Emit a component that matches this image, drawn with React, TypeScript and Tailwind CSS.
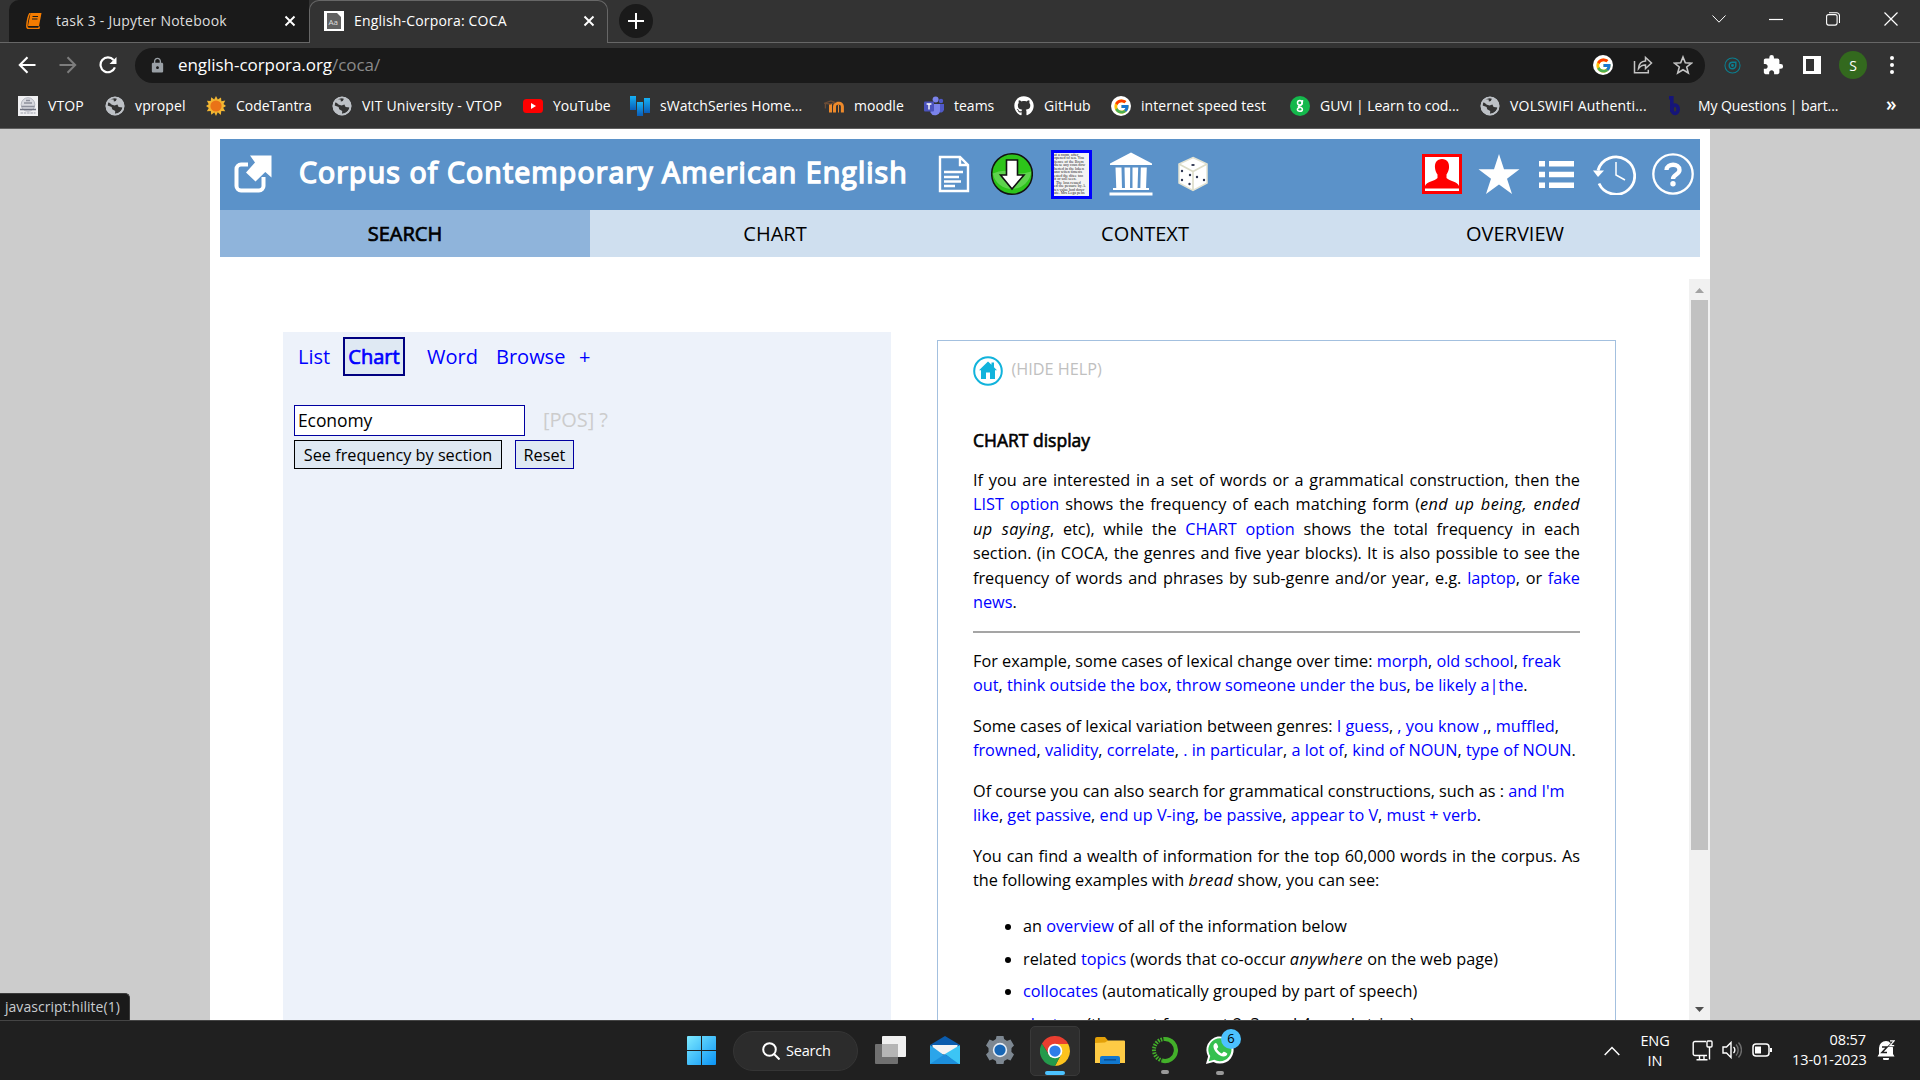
import React from "react";
import { FcGoogle } from "react-icons/fc";
import { FaGithub } from "react-icons/fa";
import { MdExtension, MdLock } from "react-icons/md";

type Kids = { children: React.ReactNode };

function Globe() {
  return (
    <svg viewBox="0 0 20 20" className="h-5 w-5">
      <circle cx="10" cy="10" r="9.3" fill="#bdc1c6" />
      <path d="M8.6 1.8 L12 2.6 L10.8 5 L8.2 5.8 L6.2 8.4 L9.6 9.4 L12.4 8.6 L13.6 11 L17.6 11.6 C16.6 15 14 17.6 10 17.9 L10.2 15 L7.2 13.2 L6.6 11 L2.6 9.4 C2.6 9.4 3 4 8.6 1.8 Z" fill="#333" />
      <path d="M3 5.8 L6.4 8.2 L9 6.4 L8.6 3.6 L6 3.2Z" fill="#bdc1c6" />
      <circle cx="10" cy="10" r="8.6" fill="none" stroke="#bdc1c6" strokeWidth="1.8" />
    </svg>
  );
}

function GoogleDot() {
  return (
    <span className="flex h-5 w-5 items-center justify-center rounded-full bg-white">
      <FcGoogle size={17} />
    </span>
  );
}

function VtopIcon() {
  return (
    <svg viewBox="0 0 20 20" className="h-5 w-5">
      <rect width="20" height="20" fill="#f0f0f2" />
      <circle cx="10" cy="8.5" r="6.8" fill="#d8d9df" stroke="#b5b7c0" strokeWidth="1" />
      <path d="M3.5 10.5h13M6 7h8M8 4.500h4" stroke="#8d909c" strokeWidth="1.5" />
      <path d="M2 13.500h16" stroke="#6f7280" strokeWidth="1.5" />
      <path d="M2.500 17h15" stroke="#9a9ca8" strokeWidth="1.2" strokeDasharray="2.5 .8" />
    </svg>
  );
}

function SunIcon() {
  return (
    <svg viewBox="0 0 20 20" className="h-5 w-5">
      <path d="M10 0l1.800 3.600L15 1.400l.4 3.800 3.900-.6-1.800 3.500L20 10l-2.800 1.800 2 3.400-3.900-.3-.5 4-3-2.600L10 20l-1.700-3.400-3.100 2.200-.4-3.900-4 .4 2-3.400L0 10l2.700-1.800L.9 4.700l3.800.4.5-3.800 3 2.200z" fill="#f2b632" />
      <circle cx="10" cy="10" r="5.6" fill="#ea7317" />
    </svg>
  );
}

function YouTubeIcon() {
  return (
    <svg viewBox="0 0 20 20" className="h-5 w-5">
      <rect y="3" width="20" height="14" rx="3.5" fill="#f00" />
      <path d="M8 7l5 3-5 3z" fill="#fff" />
    </svg>
  );
}

function WatchIcon() {
  return (
    <svg viewBox="0 0 20 20" className="h-5 w-5">
      <defs>
        <linearGradient id="wt" x1="0" y1="0" x2="0" y2="1">
          <stop offset="0" stopColor="#16b1f5" />
          <stop offset="1" stopColor="#0a5cb8" />
        </linearGradient>
      </defs>
      <rect width="6" height="14" fill="url(#wt)" />
      <rect x="7" y="6" width="6" height="14" fill="url(#wt)" />
      <rect x="14" y="2" width="6" height="15" fill="url(#wt)" />
    </svg>
  );
}

function MoodleIcon() {
  return (
    <svg viewBox="0 0 20 20" className="h-5 w-5" fill="none">
      <path d="M6.500 8v8.500M10.500 16.500V10.500a3.200 3.200 0 0 1 3.200-3.200h1.500a3.200 3.200 0 0 1 3.200 3.200v6" stroke="#ee8a2b" strokeWidth="3" />
      <path d="M14.500 9v7.500" stroke="#ee8a2b" strokeWidth="1" />
      <path d="M0 7.500L7 5l4 1.500-5 1.500-4.600-.6v5" stroke="#6b4c35" strokeWidth="1.3" />
    </svg>
  );
}

function TeamsIcon() {
  return (
    <svg viewBox="0 0 20 20" className="h-5 w-5">
      <circle cx="17" cy="5" r="2.2" fill="#5059c9" />
      <circle cx="11.6" cy="3.6" r="3" fill="#7b83eb" />
      <path d="M14 8h6v5.500a3.200 3.200 0 0 1-5 2.400z" fill="#5059c9" />
      <path d="M7 8h9v6.500a5 5 0 0 1-9.500 2z" fill="#7b83eb" />
      <rect y="5.5" width="10" height="10" rx="1" fill="#4b53bc" />
      <path d="M2.600 8h4.800M5 8v5.400" stroke="#fff" strokeWidth="1.4" />
    </svg>
  );
}

function GuviIcon() {
  return (
    <svg viewBox="0 0 20 20" className="h-5 w-5" fill="none" stroke="#fff" strokeWidth="1.5">
      <circle cx="10" cy="10" r="10" fill="#14b84c" stroke="none" />
      <circle cx="9.8" cy="6.7" r="2.3" />
      <path d="M12.600 4.200L12 8.200c-1 1.600-3.600 1-3.600 2.200 0 .8 4 .4 4 3 0 2.600-5 2.400-5 .2 0-1.200 1-1.800 2.400-2" />
    </svg>
  );
}

function BIcon() {
  return (
    <svg viewBox="0 0 20 20" className="h-5 w-5" fill="none" stroke="#16157a" strokeWidth="3.6">
      <path d="M1 1.800h2.800V16" />
      <ellipse cx="7" cy="13.3" rx="3.2" ry="4.2" />
    </svg>
  );
}

function Bookmark({ w, icon, label, track }: { w: string; icon: React.ReactNode; label: string; track: string }) {
  return (
    <div className={`flex shrink-0 items-center gap-[10px] whitespace-nowrap ${w}`}>
      <span className="flex h-5 w-5 shrink-0 items-center justify-center">{icon}</span>
      <span className={`pb-[2px] ${track}`}>{label}</span>
    </div>
  );
}

function CloseX() {
  return (
    <svg viewBox="0 0 12 12" className="h-3 w-3" stroke="#fff" strokeWidth="1.9">
      <path d="M1.500 1.500l9 9M10.500 1.500l-9 9" />
    </svg>
  );
}

function TabStrip() {
  return (
    <div className="flex h-[43px] bg-[#333]">
      <div className="flex w-[9px] shrink-0 items-end border-b border-[#676767]" />
      <div className="flex w-[300px] shrink-0 items-center rounded-tl-[10px] border-b border-[#676767] bg-[#1a1a1a] pl-[17px] text-[#dedede]">
        <svg viewBox="0 0 16 16" className="h-4 w-4">
          <path d="M4.500 0H15.500L13 13H2z" fill="#f57c00" />
          <path d="M4.500 0C2.500.5 1 9 .8 13c0 1.600.8 2.500 2 2.500h10l.6-2" fill="none" stroke="#f57c00" strokeWidth="1.5" />
          <path d="M6.500 3.500h5.500M6 6h5.500" stroke="#1a1a1a" strokeWidth="1.2" />
        </svg>
        <span className="ml-[14px] w-[216px] whitespace-nowrap pb-[2px] text-[14px] tracking-[0.24px]">task 3 - Jupyter Notebook</span>
        <span className="ml-[12px]"><CloseX /></span>
      </div>
      <div className="flex w-[299px] shrink-0 items-center rounded-t-[10px] border border-b-0 border-[#676767] pb-[2px] pl-[14px] text-white">
        <svg viewBox="0 0 20 20" className="h-5 w-5">
          <rect width="20" height="20" fill="#fff" />
          <path d="M3 2h10l4 4v12H3z" fill="#616161" />
          <text x="4.5" y="14" fontSize="8" fill="#ddd" fontFamily="Open Sans">Aa</text>
        </svg>
        <span className="ml-[10px] w-[219px] whitespace-nowrap pb-[1px] text-[14px] tracking-[0.18px]">English-Corpora: COCA</span>
        <span className="ml-[10px]"><CloseX /></span>
      </div>
      <div className="flex flex-1 items-center border-b border-[#676767] pl-[11px]">
        <span className="flex h-[34px] w-[34px] items-center justify-center rounded-full bg-[#1a1a1a]">
          <svg viewBox="0 0 16 16" className="h-4 w-4" stroke="#fff" strokeWidth="2"><path d="M8 0v16M0 8h16" /></svg>
        </span>
        <div className="ml-auto mt-[-5px] flex items-center pr-[22px]">
          <svg viewBox="0 0 14 8" className="mr-[43px] h-2 w-[14px]" fill="none" stroke="#fff"><path d="M.5.5L7 7.200 13.500.5" /></svg>
          <svg viewBox="0 0 14 14" className="mr-[43px] h-[14px] w-[14px]" stroke="#fff" strokeWidth="1.2"><path d="M0 7.500h14" /></svg>
          <svg viewBox="0 0 14 14" className="mr-[44px] h-[14px] w-[14px]" fill="none" stroke="#fff" strokeWidth="1.1">
            <rect x=".6" y="2.6" width="10.5" height="10.5" rx="2" />
            <path d="M3 .8h7.500a3 3 0 0 1 3 3V11" />
          </svg>
          <svg viewBox="0 0 14 14" className="h-[14px] w-[14px]" stroke="#fff" strokeWidth="1.2"><path d="M.5.5l13 13M13.500.5l-13 13" /></svg>
        </div>
      </div>
    </div>
  );
}

function Toolbar() {
  return (
    <div className="flex h-[44px] items-center bg-[#333] pl-[18px]">
      <svg viewBox="0 0 18 18" className="h-[18px] w-[18px]" fill="none" stroke="#fff" strokeWidth="2.1"><path d="M17.500 9H2M9.500 1.200L1.800 9l7.700 7.800" /></svg>
      <svg viewBox="0 0 18 18" className="ml-[23px] h-[18px] w-[18px]" fill="none" stroke="#7d7d7d" strokeWidth="2"><path d="M.5 9H16M8.500 1.200L16.200 9l-7.700 7.800" /></svg>
      <svg viewBox="0 0 18 18" className="ml-[22px] h-[18px] w-[18px]" fill="none" stroke="#fff" strokeWidth="2.2">
        <path d="M15.900 11.400A7.400 7.400 0 1 1 14.600 4" />
        <path d="M17.500 1v7h-7z" fill="#fff" stroke="none" />
      </svg>
      <div className="ml-[18px] flex h-[35px] w-[1570px] items-center rounded-full bg-[#1a1a1a] pl-[14px] pr-[12px]">
        <MdLock size={17} color="#9aa0a6" />
        <span className="ml-[12px] whitespace-nowrap text-[17px] tracking-[-0.05px] text-white">english-corpora.org<span className="text-[#8b8b8b]">/coca/</span></span>
        <div className="ml-auto flex items-center">
          <GoogleDot />
          <svg viewBox="0 0 20 20" className="ml-[20px] h-5 w-5" fill="none" stroke="#c4c4c4" strokeWidth="1.5">
            <path d="M1.500 6v11.800h13.800v-3" />
            <path d="M5.500 13.500c.4-5 3.200-7.300 7-7.500V2.500l6 5.500-6 5.500V10c-3-.1-5 .8-7 3.500z" />
          </svg>
          <svg viewBox="0 0 20 20" className="ml-[20px] h-5 w-5" fill="none" stroke="#c4c4c4" strokeWidth="1.6"><path d="M10 2l2.300 5.700 6.200.4-4.800 3.900 1.600 6-5.300-3.300L4.700 18l1.600-6L1.500 8.100l6.200-.4z" /></svg>
        </div>
      </div>
      <svg viewBox="0 0 18 18" className="ml-[19px] h-[17px] w-[17px]" fill="none" stroke="#0b7f90" strokeWidth="1.5">
        <circle cx="9" cy="9" r="8" strokeWidth="1.1" />
        <path d="M12.500 5.500v3.500a3.500 3.500 0 1 1-3.500-3.500z" />
        <circle cx="9" cy="9" r=".8" />
      </svg>
      <span className="ml-[21px]"><MdExtension size={22} color="#fff" /></span>
      <span className="ml-[19px] h-[18px] w-[18px] border-[3px] border-r-[7px] border-white" />
      <span className="ml-[18px] flex h-7 w-7 items-center justify-center rounded-full bg-[#33691e] text-[14px] text-white">S</span>
      <span className="ml-[23px] flex flex-col gap-[3px]">
        <i className="h-[4px] w-[4px] rounded-full bg-white" />
        <i className="h-[4px] w-[4px] rounded-full bg-white" />
        <i className="h-[4px] w-[4px] rounded-full bg-white" />
      </span>
    </div>
  );
}

function Bookmarks() {
  return (
    <div className="flex h-[42px] items-center border-b border-[#5f5f5f] bg-[#333] pb-[3px] pl-[18px] text-[14px] text-white">
      <Bookmark w="w-[87px]" icon={<VtopIcon />} label="VTOP" track="tracking-[0.1px]" />
      <Bookmark w="w-[101px]" icon={<Globe />} label="vpropel" track="tracking-[0.15px]" />
      <Bookmark w="w-[126px]" icon={<SunIcon />} label="CodeTantra" track="tracking-[-0.05px]" />
      <Bookmark w="w-[191px]" icon={<Globe />} label="VIT University - VTOP" track="tracking-[0.2px]" />
      <Bookmark w="w-[107px]" icon={<YouTubeIcon />} label="YouTube" track="tracking-[0px]" />
      <Bookmark w="w-[194px]" icon={<WatchIcon />} label="sWatchSeries Home..." track="tracking-[0.05px]" />
      <Bookmark w="w-[100px]" icon={<MoodleIcon />} label="moodle" track="tracking-[0px]" />
      <Bookmark w="w-[90px]" icon={<TeamsIcon />} label="teams" track="tracking-[0px]" />
      <Bookmark w="w-[97px]" icon={<FaGithub size={20} />} label="GitHub" track="tracking-[0.1px]" />
      <Bookmark w="w-[179px]" icon={<GoogleDot />} label="internet speed test" track="tracking-[0.08px]" />
      <Bookmark w="w-[190px]" icon={<GuviIcon />} label="GUVI | Learn to cod..." track="tracking-[-0.05px]" />
      <Bookmark w="w-[188px]" icon={<Globe />} label="VOLSWIFI Authenti..." track="tracking-[0.2px]" />
      <Bookmark w="w-[218px]" icon={<BIcon />} label="My Questions | bart..." track="tracking-[-0.1px]" />
      <span className="pb-[3px] text-[19px] font-semibold leading-none">»</span>
    </div>
  );
}

function DiceIcon() {
  return (
    <svg viewBox="0 0 34 36" className="h-[36px] w-[34px]">
      <path d="M17 1.500L31 8v19L17 34.500 3 27V8z" fill="#fff" stroke="#e3e3d3" strokeWidth="1.5" />
      <path d="M3 8l14 7.500L31 8M17 15.500v19" fill="none" stroke="#dcdcc8" strokeWidth="1.6" />
      <g fill="#2d3550">
        <ellipse cx="17" cy="9" rx="1.8" ry="1.1" />
        <circle cx="6" cy="15" r="1.2" /><circle cx="14" cy="19" r="1.2" /><circle cx="6" cy="24" r="1.2" /><circle cx="13.5" cy="28" r="1.2" />
        <circle cx="21" cy="21" r="1.2" /><circle cx="28" cy="24" r="1.2" />
      </g>
    </svg>
  );
}

const PAGE_TEXT = ["at a room, after", "opened to sea. You", "itence of the Brem", "these any cous dow", "berted in the loken", "ano witen timests", "ested the ditee too", "it or soll seen.", "  The loss resued", "ed the pessure by A", "tes value hod dowr", "ate. Mrs Lega pebs"];

function Header() {
  return (
    <div className="flex h-[71px] items-center bg-[#5b92c9] pb-[1px]">
      <svg viewBox="0 0 38 38" className="ml-[14px] h-[38px] w-[38px]">
        <path d="M14 9.500H7a4.500 4.500 0 0 0-4.500 4.500v17A4.500 4.500 0 0 0 7 35.500h18a4.500 4.500 0 0 0 4.500-4.500v-9" fill="none" stroke="#fff" strokeWidth="4" />
        <path d="M16 .5H37.500V22.500L31.300 17 21.500 26.500 12 17.500 21 7.500z" fill="#fff" />
      </svg>
      <h1 className="ml-[27px] w-[612px] whitespace-nowrap pb-[4px] text-[28.5px] tracking-[1.12px] text-white [-webkit-text-stroke:1.5px_white]">Corpus of Contemporary American English</h1>
      <svg viewBox="0 0 32 38" className="ml-[27px] h-[38px] w-[32px]" fill="none" stroke="#fff" strokeWidth="2.4">
        <path d="M2 2h20l8 8v26H2zM22 2v8h8" />
        <path d="M6 17h19M6 22h15M6 26.500h17M6 31h11" />
      </svg>
      <svg viewBox="0 0 42 44" className="ml-[21px] h-[44px] w-[42px]">
        <circle cx="21" cy="22" r="20.3" fill="#2dc41a" stroke="#111" strokeWidth="1.5" />
        <path d="M1.800 21.500Q12 17 20 20t20.300-.5A19.500 19.500 0 0 1 1.800 21.500z" fill="#5ed34d" />
        <path d="M15.500 8h11v15H33L21 37 9.500 23h6z" fill="#fff" stroke="#111" strokeWidth="1.6" />
      </svg>
      <div className="ml-[18px] h-[49px] w-[41px] overflow-hidden border-[3px] border-[#00f] bg-[#f3f3f3] font-['Liberation_Serif'] text-[4px] leading-[3.5px] text-[#222]">
        {PAGE_TEXT.map((t) => <div key={t} className="whitespace-pre">{t}</div>)}
      </div>
      <svg viewBox="0 0 44 44" className="ml-[17px] h-[44px] w-[44px]" fill="#fff">
        <path d="M22 .5L43 11.500v1.500H1v-1.500zM6.500 15.500h6L13 37H7.300zM15.500 15.500h5.700L21 37h-5zM23.500 15.500h5.700L28.500 37h-5zM31.800 15.500h6L37 37h-5.700zM4 36h36v2H4zM.5 40.500h43v3H.5z" />
      </svg>
      <span className="ml-[23px]"><DiceIcon /></span>
      <div className="ml-auto flex items-center pr-[6px]">
        <svg viewBox="0 0 40 40" className="h-10 w-10">
          <rect x="1.5" y="1.5" width="37" height="37" fill="#fff" stroke="#f00" strokeWidth="3" />
          <path d="M20 5c5 0 7.500 3.500 7 9-.3 3-1.500 5-2.500 6.500V24c3 3 11 3.500 12.500 8v2.500H3V32c1.500-4.500 10-5 12.500-8v-3.500C14.300 19 13.300 17 13 14c-.5-5.500 2-9 7-9z" fill="#f00" />
        </svg>
        <svg viewBox="0 0 42 40" className="ml-[16px] h-[40px] w-[42px]"><path d="M21 0l5 15.200h15.500L29 24.700 34 40 21 30.500 8 40l5-15.300L.5 15.200H16z" fill="#fff" /></svg>
        <svg viewBox="0 0 35 27" className="ml-[19px] h-[27px] w-[35px]" fill="#fff"><path d="M0 0h6v5.500H0zM10 0h25v5.500H10zM0 10.700h6v5.500H0zM10 10.700h25v5.500H10zM0 21.500h6V27H0zM10 21.500h25V27H10z" /></svg>
        <svg viewBox="0 0 44 42" className="ml-[18px] h-[42px] w-[44px]" fill="none" stroke="#fff" strokeWidth="2.8">
          <path d="M6 17.500a18.700 18.700 0 1 1 1 13" />
          <path d="M1 17.500h11L6 24z" fill="#fff" stroke="none" />
          <path d="M24 9v13l9 5" strokeWidth="1.5" />
        </svg>
        <svg viewBox="0 0 42 42" className="ml-[16px] h-[42px] w-[42px]">
          <circle cx="21" cy="21" r="19.7" fill="none" stroke="#fff" strokeWidth="2.3" />
          <path d="M14.500 17c.3-7 13-7 13 0 0 4.500-6.500 4.500-6.500 9" fill="none" stroke="#fff" strokeWidth="4.3" />
          <circle cx="21" cy="30.7" r="2.7" fill="#fff" />
        </svg>
      </div>
    </div>
  );
}

const A = ({ children }: Kids) => <a className="text-[#00f]">{children}</a>;
const Em = ({ children }: Kids) => <em className="tracking-[0.45px]">{children}</em>;

function List({ items }: { items: string[] }) {
  return (
    <>
      {items.map((t, i) => (
        <React.Fragment key={t}>{i > 0 && ", "}<A>{t}</A></React.Fragment>
      ))}
    </>
  );
}

function Help() {
  return (
    <div className="ml-[46px] mt-[61px] h-[680px] w-[679px] overflow-hidden border border-b-0 border-[#a3c0df] px-[35px] text-[16.25px] leading-[24.375px] text-black">
      <div className="mt-[14px] flex h-[32px] items-center">
        <svg viewBox="0 0 30 30" className="h-[30px] w-[30px]">
          <circle cx="15" cy="15" r="13.8" fill="none" stroke="#11b3dc" strokeWidth="2" />
          <path d="M15 5.500l3.500 3.300V6.500h2.500v4.700l3 3.100h-2V23h-5v-6.500h-4V23H8v-8.700H6z" fill="#11b3dc" />
        </svg>
        <span className="ml-[8.5px] pb-[4px] text-[#c0c0c0]">(HIDE HELP)</span>
      </div>
      <h2 className="mt-[40px] text-[17.5px] leading-[26px] [-webkit-text-stroke:0.6px_black]">CHART display</h2>
      <p className="mt-[15px] text-justify">
        If you are interested in a set of words or a grammatical construction, then the <A>LIST option</A> shows the frequency of each matching form (<Em>end up being, ended up saying</Em>, etc), while the <A>CHART option</A> shows the total frequency in each section. (in COCA, the genres and five year blocks). It is also possible to see the frequency of words and phrases by sub-genre and/or year, e.g. <A>laptop</A>, or <A>fake news</A>.
      </p>
      <hr className="mt-[16.25px] border-t-2 border-[#a5a5a5]" />
      <p className="mt-[16.5px]">For example, some cases of lexical change over time: <List items={["morph", "old school", "freak out", "think outside the box", "throw someone under the bus", "be likely a|the"]} />.</p>
      <p className="mt-[16.25px]">Some cases of lexical variation between genres: <List items={["I guess", ", you know ,", "muffled", "frowned", "validity", "correlate", ". in particular", "a lot of", "kind of NOUN", "type of NOUN"]} />.</p>
      <p className="mt-[16.25px]">Of course you can also search for grammatical constructions, such as : <List items={["and I'm like", "get passive", "end up V-ing", "be passive", "appear to V", "must + verb"]} />.</p>
      <p className="mt-[16.25px] text-justify">You can find a wealth of information for the top 60,000 words in the corpus. As the following examples with <Em>bread</Em> show, you can see:</p>
      <ul className="mt-[21.5px] list-disc pl-[50px] [&>li]:mb-[8.1px]">
        <li>an <A>overview</A> of all of the information below</li>
        <li>related <A>topics</A> (words that co-occur <Em>anywhere</Em> on the web page)</li>
        <li><A>collocates</A> (automatically grouped by part of speech)</li>
        <li><A>clusters</A> (the most frequent 2, 3, and 4-word strings)</li>
      </ul>
    </div>
  );
}

function SearchPanel() {
  return (
    <div className="ml-[73px] mt-[53px] h-[688px] w-[608px] bg-[#edf2fa]">
      <div className="mt-[5px] flex h-[39px] items-center whitespace-nowrap pl-[15px] text-[20px] text-[#00f]">
        <span className="w-[45px]">List</span>
        <span className="flex h-[39px] w-[62px] items-center justify-center border-2 border-[#000080] bg-[#dfe9f3] [-webkit-text-stroke:0.7px_#00f]">Chart</span>
        <span className="ml-[22px] w-[69px]">Word</span>
        <span className="w-[83px]">Browse</span>
        <span>+</span>
      </div>
      <div className="mt-[29px] flex items-center pl-[11px]">
        <div className="flex h-[31px] w-[231px] items-center border border-[#0000a0] bg-white pl-[3px] text-[17.5px] tracking-[-0.1px]">Economy</div>
        <span className="ml-[18px] pb-[1px] text-[20px] leading-[30px] tracking-[-0.1px] text-[#ccc]">[POS] ?</span>
      </div>
      <div className="mt-[4px] flex pl-[11px] text-[16.25px]">
        <div className="flex h-[29px] w-[208px] items-center justify-center whitespace-nowrap border border-black bg-[#dfe9f3] pt-[1px]">See frequency by section</div>
        <div className="ml-[13px] flex h-[29px] w-[59px] items-center justify-center border border-[#0000a0] bg-[#dfe9f3] pt-[1px]">Reset</div>
      </div>
    </div>
  );
}

function Page() {
  return (
    <div className="h-[891px] overflow-hidden bg-[#ccc]">
      <div className="mx-auto flex h-full w-[1500px] flex-col bg-white px-[10px] pt-[10px]">
        <Header />
        <div className="grid h-[47px] shrink-0 grid-cols-4 bg-[#cfdfef] text-center text-[20px] leading-[46px] [&>div]:pt-[1px]">
          <div className="bg-[#8fb4db] [-webkit-text-stroke:0.7px_black]">SEARCH</div>
          <div>CHART</div>
          <div>CONTEXT</div>
          <div>OVERVIEW</div>
        </div>
        <div className="-mx-[10px] mt-[22px] flex h-[741px] items-start overflow-hidden">
          <SearchPanel />
          <Help />
          <div className="ml-auto flex h-full w-[21px] flex-col items-center bg-[#f1f1f1]">
            <svg viewBox="0 0 21 21" className="h-[21px] w-[21px] shrink-0"><path d="M6 14l4.500-5 4.500 5z" fill="#a3a3a3" /></svg>
            <div className="h-[550px] w-[17px] shrink-0 bg-[#c1c1c1]" />
            <svg viewBox="0 0 21 21" className="mt-auto h-[21px] w-[21px] shrink-0"><path d="M6 8l4.500 5L15 8z" fill="#505050" /></svg>
          </div>
        </div>
      </div>
    </div>
  );
}

function ChromeIcon() {
  return (
    <svg viewBox="0 0 32 32" className="h-[30px] w-[30px]">
      <path d="M16 8.500H30.100A16 16 0 0 1 16 32L22.500 19.700z" fill="#fcc31e" />
      <path d="M9.500 19.700L2.100 8A16 16 0 0 0 16 32l6.500-12.200z" fill="#249a4b" />
      <path d="M2.100 8A16 16 0 0 1 30.100 8.500H16l-6.500 11z" fill="#ea3e30" />
      <circle cx="16" cy="16" r="7.8" fill="#fff" />
      <circle cx="16" cy="16" r="6" fill="#2f7de9" />
    </svg>
  );
}

function Taskbar() {
  return (
    <div className="flex h-[60px] items-center border-t border-[#454545] bg-[#202020] text-white">
      <svg viewBox="0 0 29 29" className="ml-[687px] h-[29px] w-[29px]">
        <defs>
          <linearGradient id="win" x1="0" y1="0" x2="1" y2="1"><stop offset="0" stopColor="#7eeaff" /><stop offset="1" stopColor="#0a93f5" /></linearGradient>
        </defs>
        <path d="M0 1a1 1 0 0 1 1-1h13v14H0zM15 0h13a1 1 0 0 1 1 1v13H15zM0 15h14v14H1a1 1 0 0 1-1-1zM15 15h14v13a1 1 0 0 1-1 1H15z" fill="url(#win)" />
      </svg>
      <div className="ml-[17px] flex h-[40px] w-[125px] items-center rounded-full border border-[#353535] bg-[#2c2c2c] pl-[28px]">
        <svg viewBox="0 0 18 18" className="h-[18px] w-[18px]" fill="none" stroke="#fff" strokeWidth="2"><circle cx="7.5" cy="7.5" r="6.3" /><path d="M12 12l5.500 5.500" /></svg>
        <span className="ml-[6px] text-[14.5px] tracking-[-0.2px]">Search</span>
      </div>
      <svg viewBox="0 0 31 28" className="ml-[17px] mt-[-2px] h-[28px] w-[31px]">
        <rect x="7" width="24" height="21" rx="1" fill="#f0f0f0" />
        <rect y="8" width="23" height="20" rx="1" fill="#777" opacity=".92" />
        <rect x="7" y="8" width="16" height="13" fill="#b5b5b5" />
      </svg>
      <svg viewBox="0 0 30 28" className="ml-[24px] mt-[-2px] h-[28px] w-[30px]">
        <path d="M0 9L15 0l15 9-15 9z" fill="#0b5cad" />
        <path d="M2.500 9h25v6L15 19 2.500 15z" fill="#f4f4f4" />
        <path d="M0 9l26 19H0z" fill="#2ba5ea" />
        <path d="M30 9L15 18 27 28h3z" fill="#3cc5f5" />
        <path d="M0 28L15 18 29 28z" fill="#1c8fdc" />
      </svg>
      <svg viewBox="0 0 30 30" className="ml-[25px] mt-[-1px] h-[30px] w-[30px]">
        <g fill="#7d8791">
          <circle cx="15" cy="15" r="11.5" />
          <path d="M11.500 1h7l1 5h-9zM11.500 29h7l1-5h-9zM1 10.500L4.500 4.500l5 2-4.500 8zM29 10.500l-3.500-6-5 2 4.500 8zM1 19.500l3.500 6 5-2-4.500-8zM29 19.500l-3.500 6-5-2 4.500-8z" />
        </g>
        <circle cx="15" cy="15" r="7.2" fill="#e8eef5" />
        <circle cx="15" cy="15" r="5.6" fill="#1766b5" />
      </svg>
      <div className="ml-[15px] flex h-[50px] w-[50px] flex-col items-center rounded-[5px] border border-[#393939] bg-[#2d2d2d] pt-[9px]">
        <ChromeIcon />
        <i className="mt-[5px] h-[4px] w-[20px] shrink-0 rounded-full bg-[#4cc2ff]" />
      </div>
      <svg viewBox="0 0 30 27" className="ml-[15px] mt-[-1px] h-[27px] w-[30px]">
        <path d="M0 2a2 2 0 0 1 2-2h8l3 3.500V8H0z" fill="#e3a008" />
        <path d="M0 6l10-.5L13 3.500h16a1 1 0 0 1 1 1V26H0z" fill="#fecb45" />
        <path d="M5 27v-6a2 2 0 0 1 2-2h16a2 2 0 0 1 2 2v6z" fill="#1178cf" />
        <path d="M9 22.800h12" stroke="#0a4f94" strokeWidth="1.5" />
      </svg>
      <div className="ml-[25px] flex h-[50px] w-[30px] flex-col items-center pt-[10px]">
        <svg viewBox="0 0 28 28" className="h-[28px] w-[28px] shrink-0" fill="none">
          <path d="M14 3a11 11 0 1 1-3 21.600" stroke="#43b02a" strokeWidth="4.2" />
          <path d="M14 3a11 11 0 0 0-3 21.600" stroke="#43b02a" strokeWidth="4" strokeDasharray="1.6 1.2" />
        </svg>
        <i className="mt-[6px] h-[4px] w-[8px] shrink-0 rounded-full bg-[#9a9a9a]" />
      </div>
      <div className="relative ml-[24px] flex h-[50px] w-[32px] flex-col items-center pt-[9px]">
        <svg viewBox="0 0 32 32" className="h-[30px] w-[32px] shrink-0">
          <path d="M1 31l2.300-8A14.500 14.500 0 1 1 9 28.700z" fill="#fff" />
          <path d="M4 28l1.600-5.500a12.300 12.300 0 1 1 4.300 4z" fill="#35c04f" />
          <path d="M11.500 8.500c-1 0-2.500 1.400-2.500 3.500 0 4.600 6 11 10.800 11 2.200 0 4-1.600 4-3 0-.6-3.300-2.400-4-2.200-.7.300-1.300 1.900-2 1.900-1.300 0-5-3.600-5-4.700 0-.8 1.300-1.400 1.300-2.200s-1.400-4.300-2.600-4.300z" fill="#fff" />
        </svg>
        <i className="mt-[6px] h-[4px] w-[8px] shrink-0 rounded-full bg-[#9a9a9a]" />
        <span className="absolute left-[17px] top-[3px] flex h-5 w-5 items-center justify-center rounded-full bg-[#4cc2ff] text-[13px] text-black">6</span>
      </div>
      <div className="ml-auto flex items-center">
        <svg viewBox="0 0 16 10" className="h-[10px] w-4" fill="none" stroke="#fff" strokeWidth="1.5"><path d="M.7 9L8 1.500 15.300 9" /></svg>
        <div className="ml-[18px] w-[34px] whitespace-nowrap text-center text-[14.5px] leading-[20px] tracking-[-0.1px]">ENG<br />IN</div>
        <svg viewBox="0 0 21 21" className="ml-[20px] mt-[-1px] h-[21px] w-[21px]" fill="none" stroke="#fff" strokeWidth="1.4">
          <path d="M14 1.500H3A1.800 1.800 0 0 0 1.200 3.300v10.400A1.800 1.800 0 0 0 3 15.500h12M7.500 15.500v4M12 15.500v4M4.500 19.800h11" />
          <rect x="15" y="1" width="5" height="6" rx="1" /><path d="M17.500 7v12.500" />
        </svg>
        <svg viewBox="0 0 20 18" className="ml-[9px] mt-[-1px] h-[18px] w-[20px]" fill="none" stroke="#fff" strokeWidth="1.4">
          <path d="M1 6h3.500L9 1.500v15L4.500 12H1z" /><path d="M11.500 6a4 4 0 0 1 0 6" /><path d="M14 3.500a8 8 0 0 1 0 11M16.500 1.500a11 11 0 0 1 0 15" stroke="#6d6d6d" />
        </svg>
        <svg viewBox="0 0 20 14" className="ml-[10px] mt-[-1px] h-[14px] w-[20px]" fill="none" stroke="#fff" strokeWidth="1.5">
          <rect x="1" y="1" width="16" height="12" rx="3" /><rect x="3" y="3.5" width="6" height="7" fill="#fff" stroke="none" /><path d="M19 5v4" strokeWidth="2" />
        </svg>
        <div className="ml-[20px] mt-[-2px] w-[74px] whitespace-nowrap text-right text-[14.5px] leading-[20px] tracking-[-0.1px]">08:57<br />13-01-2023</div>
        <svg viewBox="0 0 18 20" className="ml-[11px] mr-[25px] mt-[-1px] h-[20px] w-[18px]">
          <path d="M2 14V8a7 7 0 0 1 14 0v6l1.500 2.500H.5zM6 18h6a3 3 0 0 1-6 0z" fill="#fff" />
          <path d="M5 7h5l-5 5.500h5M12 1.500h4.500L12 6h4.500" fill="none" stroke="#202020" strokeWidth="1.6" />
          <path d="M13 .8h4.200L13 5.600h4.200" fill="none" stroke="#fff" strokeWidth="1.2" />
        </svg>
      </div>
    </div>
  );
}

export default function App() {
  return (
    <div className="relative h-[1080px] w-[1920px] overflow-hidden font-['Open_Sans',sans-serif] text-black">
      <TabStrip />
      <Toolbar />
      <Bookmarks />
      <Page />
      <Taskbar />
      <div className="absolute left-0 top-[993px] flex h-[27px] w-[130px] items-center whitespace-nowrap rounded-tr-[5px] border-r border-t border-[#3a3a3a] bg-[#1a1a1a] pb-[2px] pl-[5px] text-[14px] tracking-[0.03px] text-[#c8ccd0]">javascript:hilite(1)</div>
    </div>
  );
}
